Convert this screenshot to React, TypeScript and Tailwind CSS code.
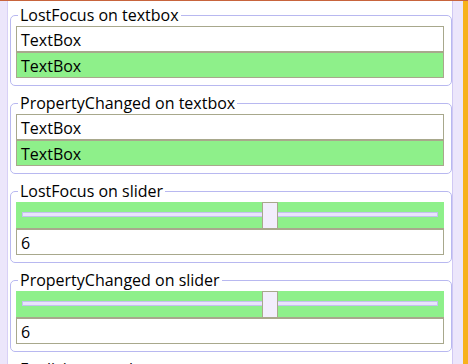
import React from 'react';

const TextRow = ({ text, green }: { text: string; green?: boolean }) => (
  <div
    className={`h-[26px] border border-[#a8a88c] px-[4px] pt-[1px] flex items-center text-[16px] text-black ${
      green ? 'bg-[#8ef08a]' : 'bg-white'
    }`}
  >
    {text}
  </div>
);

const SliderRow = ({ value }: { value: number }) => {
  const pct = (value / 10) * 100;
  return (
    <div className="relative h-[27px] bg-[#8ef08a] border-b border-[#a8a88c]">
      {/* track */}
      <div className="absolute left-[6px] right-[6px] top-[10px] h-[5px] bg-[#e8e4fb] border border-[#c4c0ee]" />
      {/* thumb */}
      <div
        className="absolute top-0 h-[27px] w-[16px] -ml-[8px] bg-[#f2eefc] border border-[#a8a88c]"
        style={{ left: `calc(14px + (100% - 28px) * ${pct / 100})` }}
      />
    </div>
  );
};

const Group = ({ title, children }: { title: string; children: React.ReactNode }) => (
  <fieldset className="border border-[#b8b8f0] rounded-[5px] pl-[5px] pr-[7px] pb-[7px] mb-[7px]">
    <legend className="ml-[2px] px-[2px] h-[20px] leading-[20px] text-[16px] text-black">{title}</legend>
    <div className="mt-[1px]">{children}</div>
  </fieldset>
);

export default function App() {
  return (
    <div
      className="w-[468px] h-[364px] overflow-hidden bg-white flex border-t border-[#c8643c]"
      style={{ fontFamily: '"Open Sans", "Liberation Sans", sans-serif' }}
    >
      {/* left edge strip */}
      <div className="w-[8px] bg-[#ece6fb] border-r border-[#d8d0f6]" />
      <div className="flex-1 pl-[2px] pt-[4px]">
        <Group title="LostFocus on textbox">
          <TextRow text="TextBox" />
          <TextRow text="TextBox" green />
        </Group>
        <Group title="PropertyChanged on textbox">
          <TextRow text="TextBox" />
          <TextRow text="TextBox" green />
        </Group>
        <Group title="LostFocus on slider">
          <SliderRow value={6} />
          <TextRow text="6" />
        </Group>
        <Group title="PropertyChanged on slider">
          <SliderRow value={6} />
          <TextRow text="6" />
        </Group>
        <Group title="Explicit on textbox">
          <TextRow text="TextBox" />
        </Group>
      </div>
      {/* right edge strips */}
      <div className="w-[11px] bg-[#ece6fb] border-l border-[#d0c8f4]" />
      <div className="w-[5px] bg-[#f7b21c]" />
    </div>
  );
}
